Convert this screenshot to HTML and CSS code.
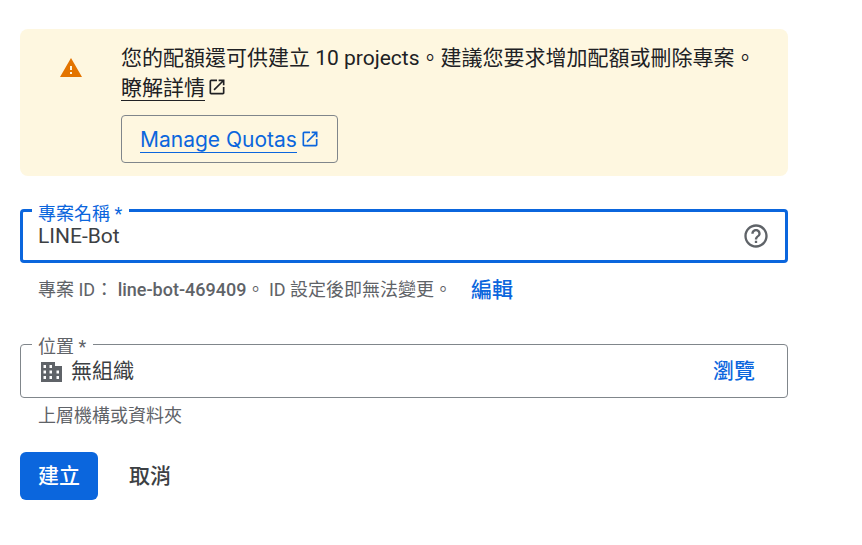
FILE: index.html
```html
<!DOCTYPE html>
<html lang="zh-Hant">
<head>
  <meta charset="UTF-8">
  <meta name="viewport" content="width=device-width, initial-scale=1.0">
  <title>新增專案</title>
  <link rel="stylesheet" href="styles.css">
</head>
<body>
  <main class="form">

    <!-- Quota warning -->
    <section class="notice">
      <svg class="notice-icon" viewBox="0 0 24 24"><path d="M1 21h22L12 2 1 21zm12-3h-2v-2h2v2zm0-4h-2v-4h2v4z"/></svg>
      <div class="notice-body">
        <p class="notice-text">您的配額還可供建立 10 projects。建議您要求增加配額或刪除專案。</p>
        <p class="notice-text">
          <a class="notice-link" href="#">瞭解詳情</a>
          <svg class="external-icon" viewBox="0 0 24 24"><path d="M19 19H5V5h7V3H5a2 2 0 0 0-2 2v14c0 1.1.9 2 2 2h14c1.1 0 2-.9 2-2v-7h-2v7zM14 3v2h3.59l-9.83 9.83 1.41 1.41L19 6.41V10h2V3h-7z"/></svg>
        </p>
        <a class="quota-button" href="#">
          <span class="quota-label">Manage Quotas</span>
          <svg class="external-icon" viewBox="0 0 24 24"><path d="M19 19H5V5h7V3H5a2 2 0 0 0-2 2v14c0 1.1.9 2 2 2h14c1.1 0 2-.9 2-2v-7h-2v7zM14 3v2h3.59l-9.83 9.83 1.41 1.41L19 6.41V10h2V3h-7z"/></svg>
        </a>
      </div>
    </section>

    <!-- Project name -->
    <div class="field field-active">
      <label class="field-label">專案名稱 *</label>
      <span class="field-value">LINE-Bot</span>
      <svg class="help-icon" viewBox="0 0 24 24"><path d="M11 18h2v-2h-2v2zm1-16C6.48 2 2 6.48 2 12s4.48 10 10 10 10-4.48 10-10S17.52 2 12 2zm0 18c-4.41 0-8-3.59-8-8s3.59-8 8-8 8 3.59 8 8-3.59 8-8 8zm0-14c-2.21 0-4 1.79-4 4h2c0-1.1.9-2 2-2s2 .9 2 2c0 2-3 1.75-3 5h2c0-2.25 3-2.5 3-5 0-2.21-1.79-4-4-4z"/></svg>
    </div>
    <div class="project-id">
      <span>專案 ID： <b class="id-value">line-bot-469409</b>。 ID 設定後即無法變更。</span>
      <a class="edit-link" href="#">編輯</a>
    </div>

    <!-- Location -->
    <div class="field field-location">
      <label class="field-label">位置 *</label>
      <svg class="org-icon" viewBox="0 0 24 24"><path fill-rule="evenodd" d="M1 3H15V7H22V23H1ZM3.5 6V9H6V6ZM9.5 6V9H12V6ZM3.5 11.5V14.5H6V11.5ZM9.5 11.5V14.5H12V11.5ZM3.5 17V20H6V17ZM9.5 17V20H12V17ZM16.5 11.5V14.5H19V11.5ZM16.5 17V20H19V17Z"/></svg>
      <span class="field-value">無組織</span>
      <a class="browse-link" href="#">瀏覽</a>
    </div>
    <p class="hint">上層機構或資料夾</p>

    <div class="actions">
      <button class="btn btn-primary">建立</button>
      <button class="btn btn-plain">取消</button>
    </div>
  </main>
</body>
</html>
```

FILE: styles.css
```css
body {
  margin: 0;
  background-color: #fff;
  font-family: Roboto, "Noto Sans CJK TC", sans-serif;
  color: #3c4043;
}

p {
  margin: 0;
}

a {
  text-decoration: none;
}

.form {
  width: 768px;
  padding: 29px 0 0 20px;
}

.notice {
  display: flex;
  height: 147px;
  box-sizing: border-box;
  padding: 14px 0 0 39px;
  background-color: #fef7e0;
  border-radius: 8px;
}

.notice-icon {
  width: 24px;
  height: 24px;
  margin-top: 13px;
  margin-right: 38px;
  fill: #e37400;
}

.notice-text {
  font-size: 21px;
  line-height: 30px;
  color: #202124;
}

.notice-link {
  color: #202124;
  border-bottom: 1px solid #202124;
}

.external-icon {
  width: 20px;
  height: 20px;
  margin-left: -3px;
  vertical-align: -2px;
  fill: #202124;
}

.quota-button {
  display: inline-flex;
  align-items: center;
  height: 48px;
  box-sizing: border-box;
  width: 217px;
  margin-top: 12px;
  padding-left: 18px;
  border: 1px solid #80868b;
  border-radius: 4px;
  font-family: Inter, Roboto, sans-serif;
  font-size: 21px;
  color: #0b66dd;
}

.quota-label {
  padding-top: 2px;
  border-bottom: 1px solid #0b66dd;
  line-height: 24px;
}

.quota-button .external-icon {
  fill: #0b66dd;
  margin-left: 3px;
}

.field {
  position: relative;
  display: flex;
  align-items: center;
  box-sizing: border-box;
  height: 54px;
  border-radius: 4px;
  font-size: 21px;
}

.field-active {
  margin-top: 33px;
  border: 3px solid #0b66dd;
  padding: 0 15px 0 15px;
}

.field-location {
  margin-top: 31px;
  border: 1px solid #80868b;
  padding: 0 32px 4px 19px;
}

.field-label {
  position: absolute;
  top: -8px;
  left: 11px;
  padding: 0 7px 0 6px;
  background-color: #fff;
  font-size: 18px;
  line-height: 20px;
  color: #5f6368;
}

.field-active .field-label {
  left: 9px;
  color: #0b66dd;
}

.field-value {
  flex: 1;
}

.help-icon {
  width: 28px;
  height: 28px;
  fill: #5f6368;
}

.project-id {
  display: flex;
  align-items: center;
  height: 50px;
  padding-left: 18px;
  font-size: 18px;
  color: #5f6368;
}

.id-value {
  font-weight: 500;
}

.edit-link {
  margin-left: 19px;
  font-size: 21px;
  font-weight: 500;
  color: #0b66dd;
}

.org-icon {
  width: 24px;
  height: 24px;
  margin-top: 4px;
  margin-right: 7px;
  fill: #5f6368;
}

.browse-link {
  font-size: 21px;
  font-weight: 500;
  color: #0b66dd;
}

.hint {
  padding: 6px 0 0 18px;
  font-size: 18px;
  line-height: 24px;
  color: #5f6368;
}

.actions {
  display: flex;
  gap: 13px;
  margin-top: 24px;
}

.btn {
  height: 48px;
  padding: 0 18px 4px;
  border: none;
  border-radius: 6px;
  font-family: inherit;
  font-size: 21px;
  font-weight: 500;
}

.btn-primary {
  background-color: #0b66dd;
  color: #fff;
}

.btn-plain {
  background: none;
  color: #3c4043;
}
```
